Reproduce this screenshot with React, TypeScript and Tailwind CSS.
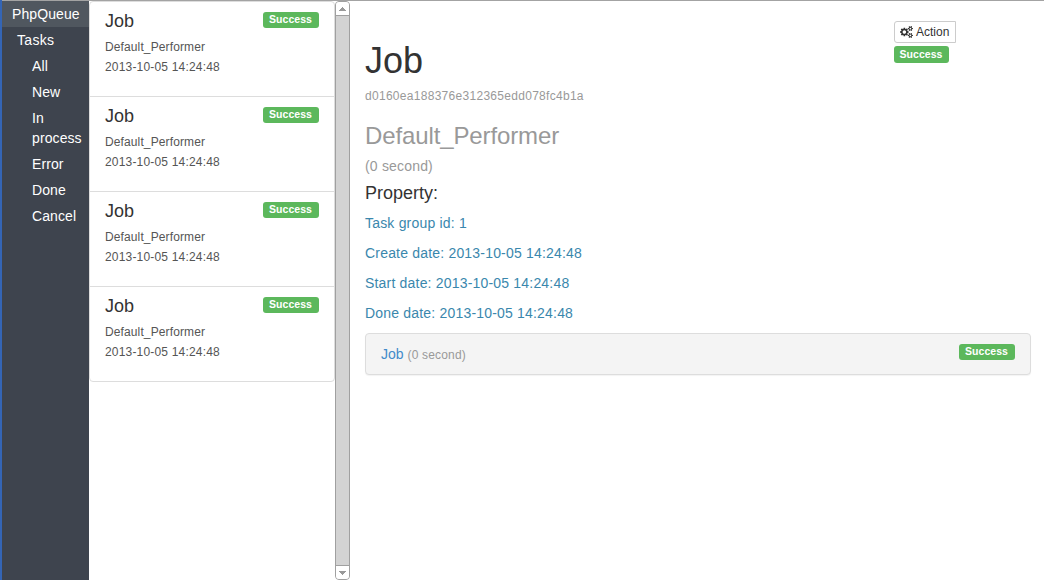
import type { ReactNode } from "react";

const statuses = ["All", "New", "In process", "Error", "Done", "Cancel"];

const jobs = [1, 2, 3, 4].map((id) => ({
  id,
  performer: "Default_Performer",
  date: "2013-10-05 14:24:48",
}));

const properties = [
  "Task group id: 1",
  "Create date: 2013-10-05 14:24:48",
  "Start date: 2013-10-05 14:24:48",
  "Done date: 2013-10-05 14:24:48",
];

function CogsIcon() {
  return (
    <svg className="mr-[3px] h-3 w-[13px]" viewBox="-64 -128 1920 1792" fill="currentColor">
      <path d="M832 768q0-106-75-181t-181-75-181 75-75 181 75 181 181 75 181-75 75-181zm768 512q0-52-38-90t-90-38-90 38-38 90q0 53 37.5 90.5t90.5 37.5 90.5-37.5 37.5-90.5zm0-1024q0-52-38-90t-90-38-90 38-38 90q0 53 37.5 90.5t90.5 37.5 90.5-37.5 37.5-90.5zm-384 421v185q0 10-7 19.5t-16 10.5l-155 24q-11 35-32 76 34 48 90 115 7 11 7 20 0 12-7 19-23 30-82.5 89.5t-78.5 59.5q-11 0-21-7l-115-90q-37 19-77 31-11 108-23 155-7 24-30 24h-186q-11 0-20-7.5t-10-17.5l-23-153q-34-10-75-31l-118 89q-7 7-20 7-11 0-21-8-144-133-144-160 0-9 7-19 10-14 41-53t47-61q-23-44-35-82l-152-24q-10-1-17-9.5t-7-19.5v-185q0-10 7-19.5t16-10.5l155-24q11-35 32-76-34-48-90-115-7-11-7-20 0-12 7-20 22-30 82-89t79-59q11 0 21 7l115 90q34-18 77-32 11-108 23-154 7-24 30-24h186q11 0 20 7.5t10 17.5l23 153q34 10 75 31l118-89q8-7 20-7 11 0 21 8 144 133 144 160 0 8-7 19-12 16-42 54t-45 60q23 48 34 82l152 23q10 2 17 10.5t7 19.5zm640 533v140q0 16-149 31-12 27-30 52 51 113 51 138 0 4-4 7-122 71-124 71-8 0-46-47t-52-68q-20 2-30 2t-30-2q-14 21-52 68t-46 47q-2 0-124-71-4-3-4-7 0-25 51-138-18-25-30-52-149-15-149-31v-140q0-16 149-31 13-29 30-52-51-113-51-138 0-4 4-7 4-2 35-20t59-34 30-16q8 0 46 46.5t52 67.5q20-2 30-2t30 2q51-71 92-112l6-2q4 0 124 70 4 3 4 7 0 25-51 138 17 23 30 52 149 15 149 31zm0-1024v140q0 16-149 31-12 27-30 52 51 113 51 138 0 4-4 7-122 71-124 71-8 0-46-47t-52-68q-20 2-30 2t-30-2q-14 21-52 68t-46 47q-2 0-124-71-4-3-4-7 0-25 51-138-18-25-30-52-149-15-149-31v-140q0-16 149-31 13-29 30-52-51-113-51-138 0-4 4-7 4-2 35-20t59-34 30-16q8 0 46 46.5t52 67.5q20-2 30-2t30 2q51-71 92-112l6-2q4 0 124 70 4 3 4 7 0 25-51 138 17 23 30 52 149 15 149 31z" />
    </svg>
  );
}

function Label({ children }: { children: ReactNode }) {
  return (
    <span className="flex h-4 w-14 items-center justify-center rounded-[3px] bg-[#5cb85c] pr-px pb-px text-[10.5px] leading-none font-bold tracking-[0.05px] text-white">
      {children}
    </span>
  );
}

function Sidebar() {
  return (
    <nav className="w-[87px] shrink-0 bg-[#3e444e] text-sm leading-5 text-white">
      <div className="bg-[#50575f] py-[3px] pl-2.5 tracking-[0.1px]">PhpQueue</div>
      <div className="py-[3px] pl-[15px] tracking-[0.3px]">Tasks</div>
      <ul className="pl-[30px] tracking-[0.1px]">
        {statuses.map((s) => (
          <li key={s} className="py-[3px]">
            {s}
          </li>
        ))}
      </ul>
    </nav>
  );
}

function JobList() {
  return (
    <section className="w-[246px] shrink-0">
      {jobs.map((job) => (
        <article
          key={job.id}
          className="-mb-px flex h-24 items-start justify-between border border-[#ddd] pl-[15px] pr-[15px] pt-[9px] first:rounded-t last:rounded-b"
        >
          <div className="text-xs leading-5 text-[#555]">
            <h4 className="mb-1.5 text-lg leading-5 text-[#333]">Job</h4>
            <p className="tracking-[0.12px]">{job.performer}</p>
            <p className="tracking-[0.18px]">{job.date}</p>
          </div>
          <div className="pt-px">
            <Label>Success</Label>
          </div>
        </article>
      ))}
    </section>
  );
}

function ScrollBar() {
  return (
    <div className="flex w-[15px] shrink-0 flex-col rounded border border-[#a0a0a0] bg-[#d3d3d3]">
      <div className="flex h-3.5 items-center justify-center rounded-t-[3px] border-b border-[#a0a0a0] bg-white">
        <svg width="7" height="4" viewBox="0 0 7 4" fill="#999">
          <path d="M3 0h1v1h1v1h1v1h1v1H0V3h1V2h1V1h1z" />
        </svg>
      </div>
      <div className="flex-1" />
      <div className="flex h-3.5 items-center justify-center rounded-b-[3px] border-t border-[#a0a0a0] bg-white">
        <svg width="7" height="4" viewBox="0 0 7 4" fill="#999">
          <path d="M0 0h7v1H6v1H5v1H4v1H3V3H2V2H1V1H0z" />
        </svg>
      </div>
    </div>
  );
}

function Detail() {
  return (
    <main className="flex-1 pl-[15px] pr-[13px]">
      <div className="flex h-[120px] justify-between">
        <div className="pt-10">
          <h1 className="text-4xl leading-10 text-[#333]">Job</h1>
          <p className="mt-[5px] text-xs leading-5 tracking-[0.29px] text-[#999]">
            d0160ea188376e312365edd078fc4b1a
          </p>
        </div>
        <div className="mr-[75px] pt-5">
          <button className="flex h-[22px] w-[62px] items-center rounded-l-[3px] border border-[#ccc] bg-white pl-[5px] text-xs leading-none text-[#333]">
            <CogsIcon />
            Action
          </button>
          <div className="mt-[3px] flex [&>span]:h-[17px] [&>span]:w-[55px]">
            <Label>Success</Label>
          </div>
        </div>
      </div>
      <h2 className="text-2xl leading-[30px] tracking-[-0.12px] text-[#999]">Default_Performer</h2>
      <p className="mt-[5px] text-sm leading-5 tracking-[0.18px] text-[#999]">(0 second)</p>
      <h4 className="mt-[7px] text-lg leading-5 text-[#333]">Property:</h4>
      <ul className="mt-2.5 space-y-2.5 text-sm leading-5 tracking-[0.19px] text-[#3a87ad]">
        {properties.map((p) => (
          <li key={p}>{p}</li>
        ))}
      </ul>
      <div className="mt-2.5 flex h-[42px] items-start justify-between rounded border border-[#ddd] bg-[#f4f4f4] px-[15px] pt-2.5 shadow-[0_1px_1px_rgba(0,0,0,0.05)]">
        <p className="text-sm leading-5 text-[#428bca]">
          Job <span className="text-xs tracking-[0.18px] text-[#999]">(0 second)</span>
        </p>
        <Label>Success</Label>
      </div>
    </main>
  );
}

export default function App() {
  return (
    <div className="flex h-[580px] w-[1044px] overflow-hidden bg-white [font-family:'Liberation_Sans',Arial,sans-serif]">
      <div className="w-0.5 shrink-0 bg-[#3465b5]" />
      <div className="flex flex-1 border-t border-[#a3a3a3]">
        <Sidebar />
        <JobList />
        <ScrollBar />
        <Detail />
      </div>
    </div>
  );
}
